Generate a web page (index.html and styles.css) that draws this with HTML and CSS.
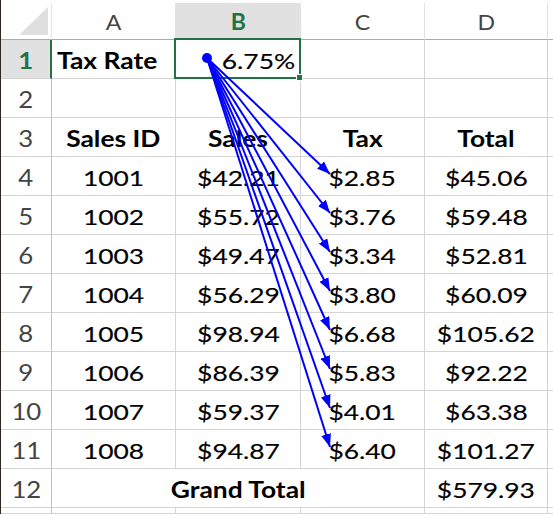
FILE: index.html
```html
<!DOCTYPE html>
<html>
<head>
<meta charset="utf-8">
<link rel="stylesheet" href="styles.css">
</head>
<body>
<div class="frame">
  <div class="sheet">
    <div class="corner"><span class="tri"></span></div>
    <div class="colhdr"><span class="t">A</span></div>
    <div class="colhdr sel"><span class="t">B</span></div>
    <div class="colhdr"><span class="t">C</span></div>
    <div class="colhdr"><span class="t">D</span></div>
    <div class="colhdr last"></div>

    <div class="rowhdr sel"><span class="t">1</span></div>
    <div class="cell bold left"><span class="t">Tax Rate</span></div>
    <div class="cell right active"><span class="t">6.75%</span><span class="handle"></span></div>
    <div class="cell"></div>
    <div class="cell"></div>
    <div class="cell last"></div>

    <div class="rowhdr"><span class="t">2</span></div>
    <div class="cell"></div>
    <div class="cell"></div>
    <div class="cell"></div>
    <div class="cell"></div>
    <div class="cell last"></div>

    <div class="rowhdr"><span class="t">3</span></div>
    <div class="cell bold"><span class="t">Sales ID</span></div>
    <div class="cell bold"><span class="t">Sales</span></div>
    <div class="cell bold"><span class="t">Tax</span></div>
    <div class="cell bold"><span class="t">Total</span></div>
    <div class="cell last"></div>

    <div class="rowhdr"><span class="t">4</span></div>
    <div class="cell"><span class="t">1001</span></div>
    <div class="cell"><span class="t">$42.21</span></div>
    <div class="cell"><span class="t">$2.85</span></div>
    <div class="cell"><span class="t">$45.06</span></div>
    <div class="cell last"></div>

    <div class="rowhdr"><span class="t">5</span></div>
    <div class="cell"><span class="t">1002</span></div>
    <div class="cell"><span class="t">$55.72</span></div>
    <div class="cell"><span class="t">$3.76</span></div>
    <div class="cell"><span class="t">$59.48</span></div>
    <div class="cell last"></div>

    <div class="rowhdr"><span class="t">6</span></div>
    <div class="cell"><span class="t">1003</span></div>
    <div class="cell"><span class="t">$49.47</span></div>
    <div class="cell"><span class="t">$3.34</span></div>
    <div class="cell"><span class="t">$52.81</span></div>
    <div class="cell last"></div>

    <div class="rowhdr"><span class="t">7</span></div>
    <div class="cell"><span class="t">1004</span></div>
    <div class="cell"><span class="t">$56.29</span></div>
    <div class="cell"><span class="t">$3.80</span></div>
    <div class="cell"><span class="t">$60.09</span></div>
    <div class="cell last"></div>

    <div class="rowhdr"><span class="t">8</span></div>
    <div class="cell"><span class="t">1005</span></div>
    <div class="cell"><span class="t">$98.94</span></div>
    <div class="cell"><span class="t">$6.68</span></div>
    <div class="cell"><span class="t">$105.62</span></div>
    <div class="cell last"></div>

    <div class="rowhdr"><span class="t">9</span></div>
    <div class="cell"><span class="t">1006</span></div>
    <div class="cell"><span class="t">$86.39</span></div>
    <div class="cell"><span class="t">$5.83</span></div>
    <div class="cell"><span class="t">$92.22</span></div>
    <div class="cell last"></div>

    <div class="rowhdr"><span class="t">10</span></div>
    <div class="cell"><span class="t">1007</span></div>
    <div class="cell"><span class="t">$59.37</span></div>
    <div class="cell"><span class="t">$4.01</span></div>
    <div class="cell"><span class="t">$63.38</span></div>
    <div class="cell last"></div>

    <div class="rowhdr"><span class="t">11</span></div>
    <div class="cell"><span class="t">1008</span></div>
    <div class="cell"><span class="t">$94.87</span></div>
    <div class="cell"><span class="t">$6.40</span></div>
    <div class="cell"><span class="t">$101.27</span></div>
    <div class="cell last"></div>

    <div class="rowhdr"><span class="t">12</span></div>
    <div class="cell bold span3"><span class="t">Grand Total</span></div>
    <div class="cell"><span class="t">$579.93</span></div>
    <div class="cell last"></div>

    <div class="rowhdr"></div>
    <div class="cell"></div>
    <div class="cell"></div>
    <div class="cell"></div>
    <div class="cell"></div>
    <div class="cell last"></div>
  </div>

  <svg class="arrows" width="553" height="514" viewBox="0 0 553 514">
    <defs>
      <marker id="ah" markerWidth="13" markerHeight="10" refX="13" refY="5" orient="auto" markerUnits="userSpaceOnUse">
        <path d="M0,0 L13,5 L0,10 z" fill="#0000ff"/>
      </marker>
    </defs>
    <g stroke="#0000ff" stroke-width="2" fill="none" marker-end="url(#ah)">
      <line x1="206" y1="58" x2="329" y2="174"/>
      <line x1="206" y1="58" x2="329" y2="213"/>
      <line x1="206" y1="58" x2="329" y2="252"/>
      <line x1="206" y1="58" x2="329" y2="291"/>
      <line x1="206" y1="58" x2="329" y2="330"/>
      <line x1="206" y1="58" x2="329" y2="369"/>
      <line x1="206" y1="58" x2="329" y2="408"/>
      <line x1="206" y1="58" x2="329" y2="447"/>
    </g>
    <circle cx="206" cy="58" r="5" fill="#0000ff"/>
  </svg>
</div>
</body>
</html>
```

FILE: styles.css
```css
html, body {
  margin: 0;
  padding: 0;
  background: #ffffff;
}

.frame {
  position: relative;
  width: 552px;
  height: 511px;
  padding-top: 3px;
  border-left: 1px solid #2e261f;
  overflow: hidden;
  font-family: Lato, "Open Sans", sans-serif;
}

.sheet {
  display: grid;
  grid-template-columns: 51px 124px 125px 124px 123px 1fr;
  grid-template-rows: 37px repeat(12, 39px) 1fr;
  height: 511px;
}

.sheet > div {
  box-sizing: border-box;
  border-right: 1px solid #d4d4d4;
  border-bottom: 1px solid #d4d4d4;
  white-space: nowrap;
  overflow: visible;
}

.t {
  display: inline-block;
  transform: scaleX(1.2);
  transform-origin: center;
}

.corner {
  position: relative;
  background: #ffffff;
  border-right: 1px solid #e6e6e6 !important;
  border-bottom: 1px solid #ababab !important;
}

.tri {
  position: absolute;
  left: 18px;
  top: 4px;
  width: 0;
  height: 0;
  border-left: 29px solid transparent;
  border-bottom: 28px solid #dfdfdf;
}

.colhdr {
  text-align: center;
  font-size: 22px;
  line-height: 34px;
  padding-top: 2px;
  color: #444444;
  border-right: 1px solid #e2e2e2 !important;
  border-bottom: 1px solid #ababab !important;
}

.colhdr .t {
  transform: scaleX(1.05);
}

.colhdr.sel {
  background: #e1e1e1;
  color: #217346;
  font-weight: 700;
}

.rowhdr {
  text-align: center;
  font-size: 23px;
  line-height: 35px;
  padding-top: 3px;
  color: #444444;
  border-right: 1px solid #c0c0c0 !important;
}

.rowhdr .t {
  transform: scaleX(1.12);
}

.rowhdr.sel {
  background: #e1e1e1;
  color: #217346;
  font-weight: 700;
  border-right: 2px solid #217346 !important;
}

.cell {
  position: relative;
  text-align: center;
  font-size: 22px;
  line-height: 35px;
  padding-top: 3px;
  color: #000000;
  -webkit-text-stroke: 0.15px #000000;
}

.cell.bold {
  font-weight: 700;
  -webkit-text-stroke: 0;
}

.cell.left {
  text-align: left;
  padding-left: 5px;
}

.cell.left .t {
  transform-origin: left center;
}

.cell.right {
  text-align: right;
  padding-right: 5px;
}

.cell.right .t {
  transform-origin: right center;
}

.cell.span3 {
  grid-column: span 3;
}

.cell.last,
.colhdr.last {
  border-right: none !important;
}

.cell.active::after {
  content: "";
  position: absolute;
  left: -2px;
  top: -2px;
  right: -1px;
  bottom: -1px;
  border: 2px solid #217346;
  pointer-events: none;
}

.handle {
  position: absolute;
  right: -3px;
  bottom: -3px;
  width: 5px;
  height: 5px;
  background: #217346;
  border: 1px solid #ffffff;
  z-index: 2;
}

.arrows {
  position: absolute;
  left: 0;
  top: 0;
  pointer-events: none;
}
```
